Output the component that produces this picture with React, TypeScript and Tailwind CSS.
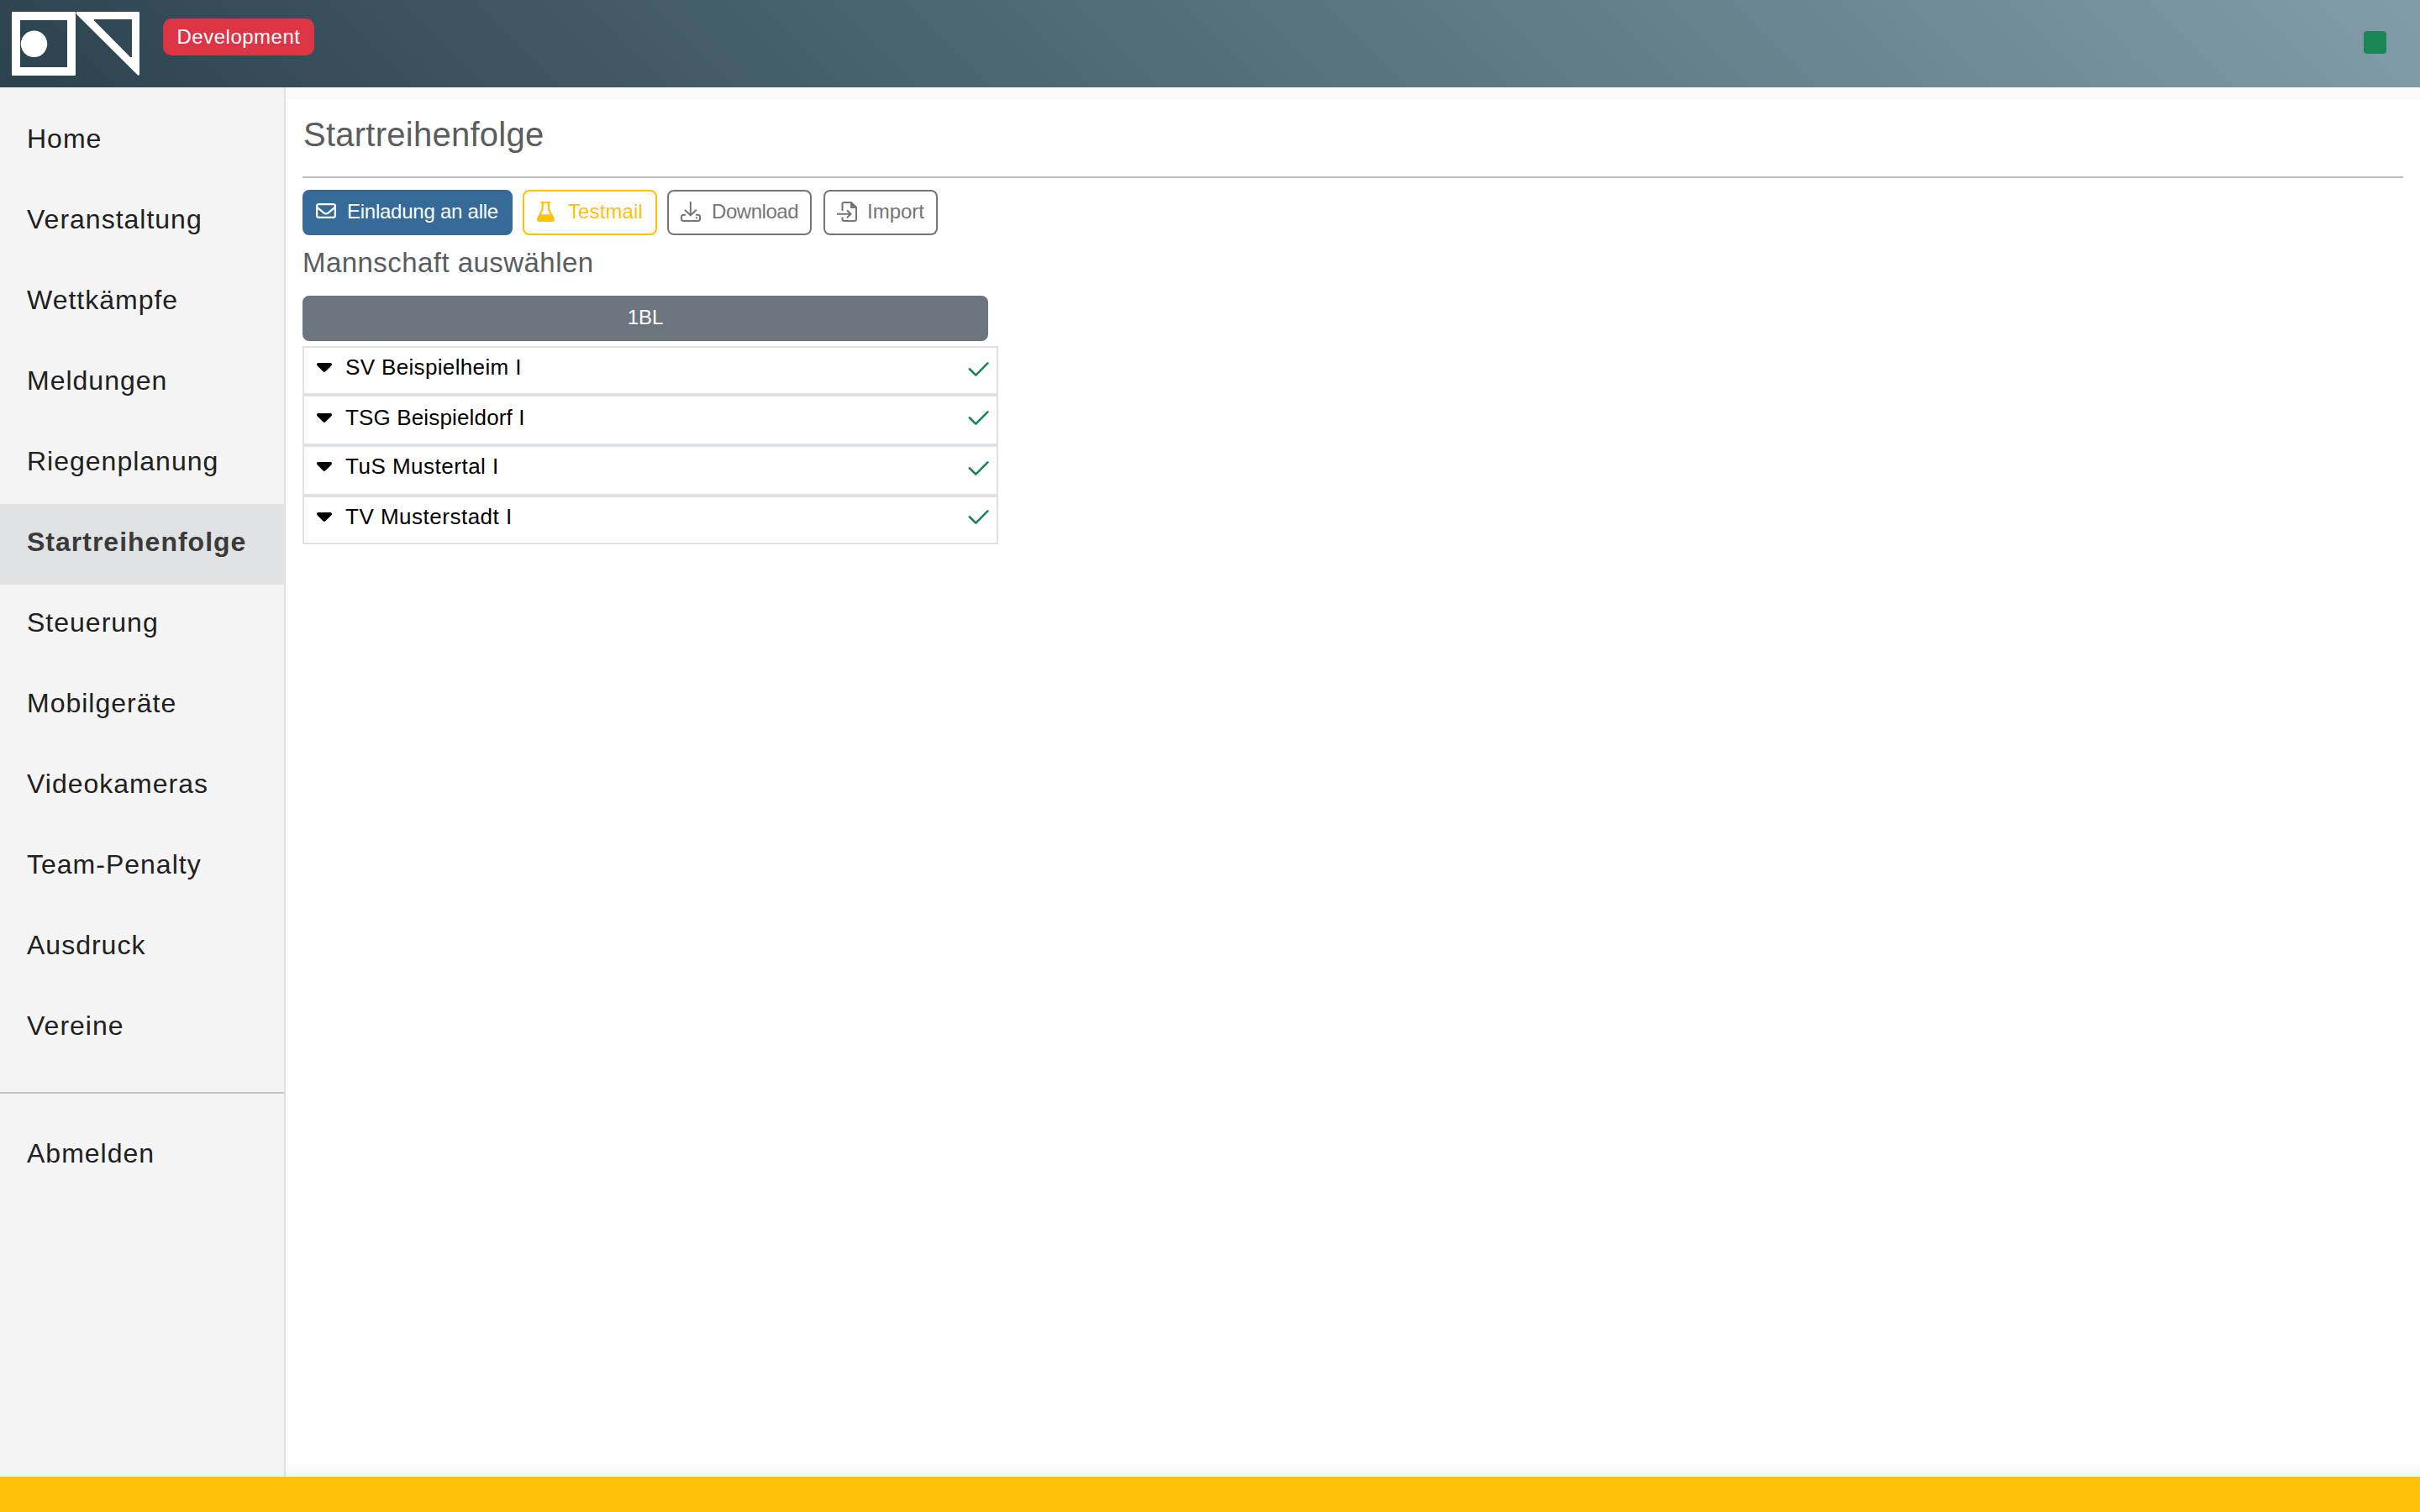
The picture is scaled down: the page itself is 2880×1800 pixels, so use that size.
import React from 'react';

const navItems = [
  'Home',
  'Veranstaltung',
  'Wettkämpfe',
  'Meldungen',
  'Riegenplanung',
  'Startreihenfolge',
  'Steuerung',
  'Mobilgeräte',
  'Videokameras',
  'Team-Penalty',
  'Ausdruck',
  'Vereine'
];

const teams = [
  { name: 'SV Beispielheim I', row: 'h-[58px]', label: 'pt-[5px] tracking-[0.350px]', caret: 'mt-[18px]', check: 'mt-[16px]' },
  { name: 'TSG Beispieldorf I', row: 'h-[60px]', label: 'pt-[7px] tracking-[0.150px]', caret: 'mt-[20px]', check: 'mt-[16px]' },
  { name: 'TuS Mustertal I', row: 'h-[60px]', label: 'pt-[5px] tracking-[0.500px]', caret: 'mt-[18px]', check: 'mt-[16px]' },
  { name: 'TV Musterstadt I', row: 'h-[58px]', label: 'pt-[5px] tracking-[0.500px]', caret: 'mt-[18px]', check: 'mt-[14px]' }
];

const Logo = () => (
  <svg className="w-[152px] h-[76px] shrink-0" viewBox="14 14 152 76" fill="#fff">
    <path
      fillRule="evenodd"
      d="M15 14H89Q90 14 90 15V89Q90 90 89 90H15Q14 90 14 89V15Q14 14 15 14ZM24 24V80H80V24Z"
    />
    <circle cx="40.5" cy="52.3" r="15.7" />
    <path
      fillRule="evenodd"
      d="M92 14H165Q166 14 166 15V89Q166 90 164 89.500L91 17Q90 14 92 14ZM112 23V24.500L155 68H157V23Z"
    />
  </svg>
);

const EnvelopeIcon = () => (
  <svg className="w-6 h-6" viewBox="0 0 512 512" fill="currentColor">
    <path d="M64 112c-8.800 0-16 7.200-16 16v22.100L220.500 291.700c20.700 17 50.400 17 71.100 0L464 150.100V128c0-8.800-7.200-16-16-16H64zM48 212.200V384c0 8.800 7.200 16 16 16h384c8.800 0 16-7.200 16-16V212.200L322 328.800c-38.400 31.500-93.700 31.500-132 0L48 212.200zM0 128C0 92.700 28.700 64 64 64h384c35.300 0 64 28.700 64 64v256c0 35.300-28.700 64-64 64H64c-35.300 0-64-28.700-64-64V128z" />
  </svg>
);

const FlaskIcon = () => (
  <svg className="w-6 h-6 mt-px" viewBox="0 0 24 24" fill="currentColor">
    <path
      fillRule="evenodd"
      d="M5.500 0H17V1.800H16V9L21.300 19Q23.200 24 19 24H4Q-.2 24 1.500 19L6.500 9V1.800H5.500ZM8.700 1.800V9.500L5.800 15.300H16.700L13.800 9.500V1.800Z"
    />
  </svg>
);

const DownloadIcon = () => (
  <svg className="w-6 h-6 mt-px" viewBox="0 0 24 24" fill="none" stroke="currentColor" strokeWidth="2">
    <path d="M11.800 0V16M4.800 9.800L11.800 16.300L18.800 9.800" />
    <path d="M6.200 15.800H3.500Q1 15.800 1 18.300V20.500Q1 23 3.500 23H20.500Q23 23 23 20.500V18.300Q23 15.800 20.500 15.800H18" />
    <path d="M18 19.300H20" />
  </svg>
);

const ImportIcon = () => (
  <svg className="w-6 h-6 mt-px" viewBox="0 0 24 24" fill="none" stroke="currentColor" strokeWidth="2">
    <path d="M6.500 11V3Q6.500 1 8.500 1H17L23 7V21Q23 23 21 23H8.500Q6.500 23 6.500 21V18.500" />
    <path fill="currentColor" stroke="none" d="M16 0V8H24V7L17 0Z" />
    <path d="M0 14.800H16.500M12 10.300L16.500 14.800L12 19.300" />
  </svg>
);

const buttons = [
  { label: 'Einladung an alle', icon: EnvelopeIcon, style: 'w-[250px] mr-3 bg-[#366a98] border-[#366a98] text-white', text: 'ml-[13px] tracking-[-0.250px]' },
  { label: 'Testmail', icon: FlaskIcon, style: 'w-[160px] mr-3 border-[#ffc107] text-[#ffc107]', text: 'ml-[14px] tracking-[0.100px]' },
  { label: 'Download', icon: DownloadIcon, style: 'w-[172px] mr-[14px] border-[#757575] text-[#757575]', text: 'ml-[13px] tracking-[-0.450px]' },
  { label: 'Import', icon: ImportIcon, style: 'w-[136px] border-[#757575] text-[#757575]', text: 'ml-3' }
];

const App = () => {
  return (
    <div className="w-[2880px] h-[1800px] flex flex-col overflow-hidden bg-[#fafafa] font-['Liberation_Sans',sans-serif]">
      <header className="h-[104px] shrink-0 flex items-start pl-[14px] pr-10 bg-linear-45 from-[#2b434f] to-[#829da9]">
        <div className="pt-[14px]">
          <Logo />
        </div>
        <div className="ml-7 mt-[22px] w-[180px] h-11 rounded-[10px] bg-[#dc3545] text-white text-2xl leading-11 text-center tracking-[0.500px]">
          Development
        </div>
        <div className="ml-auto mt-[36.500px] w-[27px] h-[27px] rounded-[4px] bg-[#198754]" />
      </header>

      <div className="flex-1 flex min-h-0">
        <nav className="w-[340px] shrink-0 pt-4 bg-[#f4f4f4] border-r-2 border-[#e0e0e0] text-[32px] tracking-[1px] text-[#202020]">
          {navItems.map((item) => (
            <a
              key={item}
              className={`flex items-center h-24 pl-8 pb-[6px] ${
                item === 'Startreihenfolge' ? 'bg-[#e1e2e4] font-bold text-[#3a3a3a]' : ''
              }`}
            >
              {item}
            </a>
          ))}
          <hr className="mt-7 mb-[26px] border-t-2 border-[#c4c4c4]" />
          <a className="flex items-center h-24 pl-8 pb-[6px]">Abmelden</a>
        </nav>

        <main className="flex-1 my-[14px] pl-5 pr-5 bg-white">
          <h1 className="h-[92px] pt-5 pl-px text-[40px] leading-[44px] tracking-[0.250px] text-[#5a5d60]">
            Startreihenfolge
          </h1>
          <hr className="border-t-2 border-[#bdbdbd]" />

          <div className="flex mt-[14px]">
            {buttons.map((button) => {
              const Icon = button.icon;
              return (
                <button
                  key={button.label}
                  className={`flex items-start h-[54px] pt-[11px] pl-[14px] border-2 rounded-[8px] text-2xl whitespace-nowrap ${button.style}`}
                >
                  <Icon />
                  <span className={`leading-[26px] ${button.text}`}>{button.label}</span>
                </button>
              );
            })}
          </div>

          <h2 className="h-[72px] pt-[13px] text-[33px] leading-[39px] tracking-[0.450px] text-[#5a5d60]">
            Mannschaft auswählen
          </h2>

          <button className="block w-[816px] h-[54px] pb-[2px] rounded-[8px] bg-[#6c757d] text-white text-2xl">
            1BL
          </button>

          <ul className="mt-[6px] w-[828px] text-[26px]">
            {teams.map((team) => (
              <li key={team.name} className={`flex items-start pl-[15px] pr-2 border-2 border-[#dee2e6] ${team.row}`}>
                <svg className={`w-[18px] h-[11px] ${team.caret}`} viewBox="0 0 320 192">
                  <path d="M137.400 182.600c12.500 12.500 32.800 12.500 45.300 0l128-128c9.200-9.200 11.900-22.900 6.900-34.900S301 0 288 0H32C19 0 7.400 7.800 2.400 19.800s-2.200 25.700 6.900 34.900l128 128z" />
                </svg>
                <span className={`ml-4 leading-[36px] ${team.label}`}>{team.name}</span>
                <svg className={`ml-auto w-[26px] h-[20px] ${team.check}`} viewBox="0 0 26 20" fill="none">
                  <path d="M1.800 9.300L9.300 16.600L23.400 2.400" stroke="#198754" strokeWidth="2.600" strokeLinecap="round" strokeLinejoin="round" />
                </svg>
              </li>
            ))}
          </ul>
        </main>
      </div>

      <footer className="h-[42px] shrink-0 bg-[#ffc107]" />
    </div>
  );
};

export default App;
